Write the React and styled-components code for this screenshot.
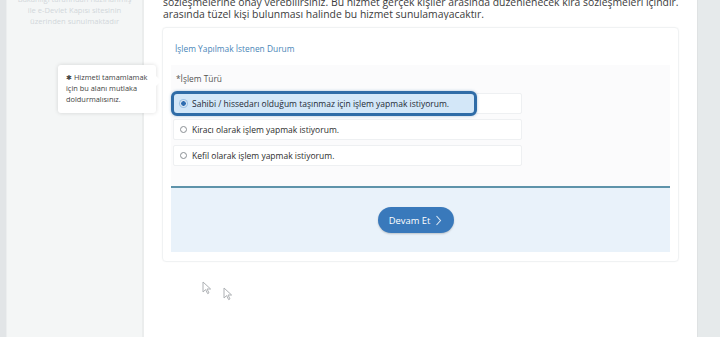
import React from "react";
import styled, { createGlobalStyle } from "styled-components";

const Global = createGlobalStyle`
  html, body {
    margin: 0;
    padding: 0;
    overflow: hidden;
    background: #ffffff;
  }
  body {
    font-family: "Open Sans", "Noto Sans", "Liberation Sans", sans-serif;
    color: #333;
  }
`;

const options = [
  { text: "Sahibi / hissedarı olduğum taşınmaz için işlem yapmak istiyorum.", selected: true },
  { text: "Kiracı olarak işlem yapmak istiyorum." },
  { text: "Kefil olarak işlem yapmak istiyorum." },
];

function Cursor({ x, y }) {
  return (
    <CursorIcon style={{ left: x, top: y }} width="10" height="14" viewBox="0 0 10 14">
      <path d="M1 1 L1 11 L3.6 8.6 L5.6 12.6 L7 11.9 L5 8 L8.6 8 Z" fill="#fff" stroke="#9a9ea2" strokeWidth="1" strokeLinejoin="round" />
    </CursorIcon>
  );
}

function App() {
  return (
    <>
      <Global />
      <Page>
        <LeftEdge />
        <Sidebar>
          <SideText>
            Bakanlığı tarafından hazırlanmış
            <br />
            ile e-Devlet Kapısı sitesinin
            <br />
            üzerinden sunulmaktadır
          </SideText>
        </Sidebar>
        <Main>
          <Intro>
            sözleşmelerine onay verebilirsiniz. Bu hizmet gerçek kişiler arasında düzenlenecek kira sözleşmeleri içindir.
            <br />
            arasında tüzel kişi bulunması halinde bu hizmet sunulamayacaktır.
          </Intro>
          <Card>
            <CardTitle>İşlem Yapılmak İstenen Durum</CardTitle>
            <FormArea>
              <FieldLabel>*İşlem Türü</FieldLabel>
              <OptionList>
                {options.map((o) => (
                  <Option key={o.text}>
                    {o.selected && <Highlight />}
                    <Radio $checked={o.selected} />
                    <OptionText $checked={o.selected}>{o.text}</OptionText>
                  </Option>
                ))}
              </OptionList>
            </FormArea>
            <Footer>
              <Button>
                Devam Et
                <svg width="7" height="11" viewBox="0 0 7 11">
                  <path d="M1.5 1 L5.5 5.5 L1.5 10" fill="none" stroke="#dce9f6" strokeWidth="1.1" />
                </svg>
              </Button>
            </Footer>
          </Card>
        </Main>
        <RightEdge />
        <Tooltip>
          <span>✱</span> Hizmeti tamamlamak
          <br />
          için bu alanı mutlaka
          <br />
          doldurmalısınız.
        </Tooltip>
        <Cursor x={202} y={281} />
        <Cursor x={223} y={287} />
      </Page>
    </>
  );
}

export default App;

const Page = styled.div`
  position: relative;
  display: flex;
  width: 720px;
  height: 337px;
  overflow: hidden;
`;

const LeftEdge = styled.div`
  flex: 0 0 6px;
  background: #e2e5e7;
  border-right: 1px solid #eceeef;
`;

const Sidebar = styled.div`
  flex: 0 0 135px;
  background: #f4f6f6;
  border-right: 2px solid #ebeded;
  overflow: hidden;
`;

const SideText = styled.div`
  margin-top: -6px;
  text-align: center;
  font-size: 7.6px;
  line-height: 11px;
  color: #d2d7db;
  white-space: nowrap;
`;

const Main = styled.div`
  flex: 1;
  min-width: 0;
  background: #fff;
  padding: 0 18px 0 19px;
  display: flex;
  flex-direction: column;
`;

const Intro = styled.p`
  margin: -4px 0 0;
  font-size: 10.4px;
  line-height: 12px;
  color: #3c3c3c;
  white-space: nowrap;
  overflow: hidden;
`;

const Card = styled.div`
  margin: 7px 0 0 -1px;
  border: 1px solid #f0f2f3;
  border-radius: 4px;
  padding: 14px 8px 9px;
  box-shadow: 0 0 2px rgba(0, 0, 0, 0.03);
`;

const CardTitle = styled.div`
  padding-left: 4px;
  font-size: 8.4px;
  line-height: 14px;
  color: #4a86b8;
  margin-bottom: 9px;
`;

const FormArea = styled.div`
  background: #fbfbfc;
  padding: 8px 0 20px 2px;
`;

const FieldLabel = styled.div`
  padding-left: 3px;
  font-size: 8.4px;
  line-height: 12px;
  color: #555;
  margin-bottom: 8px;
`;

const OptionList = styled.div`
  display: flex;
  flex-direction: column;
  gap: 5px;
`;

const Option = styled.div`
  position: relative;
  width: 349px;
  height: 21px;
  box-sizing: border-box;
  display: flex;
  align-items: center;
  gap: 5px;
  padding-left: 6px;
  background: #fff;
  border: 1px solid #eef0f2;
  border-radius: 2px;
`;

const Highlight = styled.div`
  position: absolute;
  left: -3px;
  top: -3px;
  width: 306px;
  height: 25px;
  box-sizing: border-box;
  border: 3px solid #2f6ca7;
  border-radius: 6px;
  background: #d3e7f8;
  box-shadow: 0 0 3px rgba(47, 108, 167, 0.4);
`;

const Radio = styled.span`
  position: relative;
  width: 5px;
  height: 5px;
  border-radius: 50%;
  border: 1px solid ${(p) => (p.$checked ? "#fff" : "#8a8f94")};
  background: ${(p) => (p.$checked ? "#2f6db0" : "#fff")};
  box-shadow: ${(p) => (p.$checked ? "0 0 0 1px #9fc3e4" : "none")};
`;

const OptionText = styled.span`
  position: relative;
  font-size: 8.5px;
  font-weight: ${(p) => (p.$checked ? 500 : 400)};
  color: ${(p) => (p.$checked ? "#1f2a36" : "#2d2d2d")};
  white-space: nowrap;
`;

const Footer = styled.div`
  border-top: 2px solid #5e93aa;
  background: #e9f2fa;
  height: 64px;
  display: flex;
  align-items: center;
  justify-content: center;
  padding-right: 10px;
`;

const Button = styled.div`
  display: flex;
  align-items: center;
  justify-content: center;
  gap: 5px;
  width: 76px;
  height: 26px;
  box-sizing: border-box;
  border-radius: 13px;
  background: #3979bb;
  color: #fff;
  font-size: 9.4px;
  font-weight: 500;
  box-shadow: 0 1px 2px rgba(0, 0, 0, 0.2);
`;

const RightEdge = styled.div`
  flex: 0 0 22px;
  background: #e6eaeb;
  border-left: 1px solid #dfe2e3;
`;

const Tooltip = styled.div`
  position: absolute;
  left: 58px;
  top: 65px;
  width: 98px;
  height: 48px;
  box-sizing: border-box;
  padding: 7px 6px 0 8px;
  background: #fff;
  border-radius: 3px;
  box-shadow: 0 0 4px rgba(0, 0, 0, 0.14);
  font-size: 7.4px;
  line-height: 11px;
  color: #444;

  span {
    font-size: 7px;
  }

  &::after {
    content: "";
    position: absolute;
    right: -5px;
    top: 11px;
    border-top: 5px solid transparent;
    border-bottom: 5px solid transparent;
    border-left: 5px solid #fff;
  }
`;

const CursorIcon = styled.svg`
  position: absolute;
  opacity: 0.8;
`;
